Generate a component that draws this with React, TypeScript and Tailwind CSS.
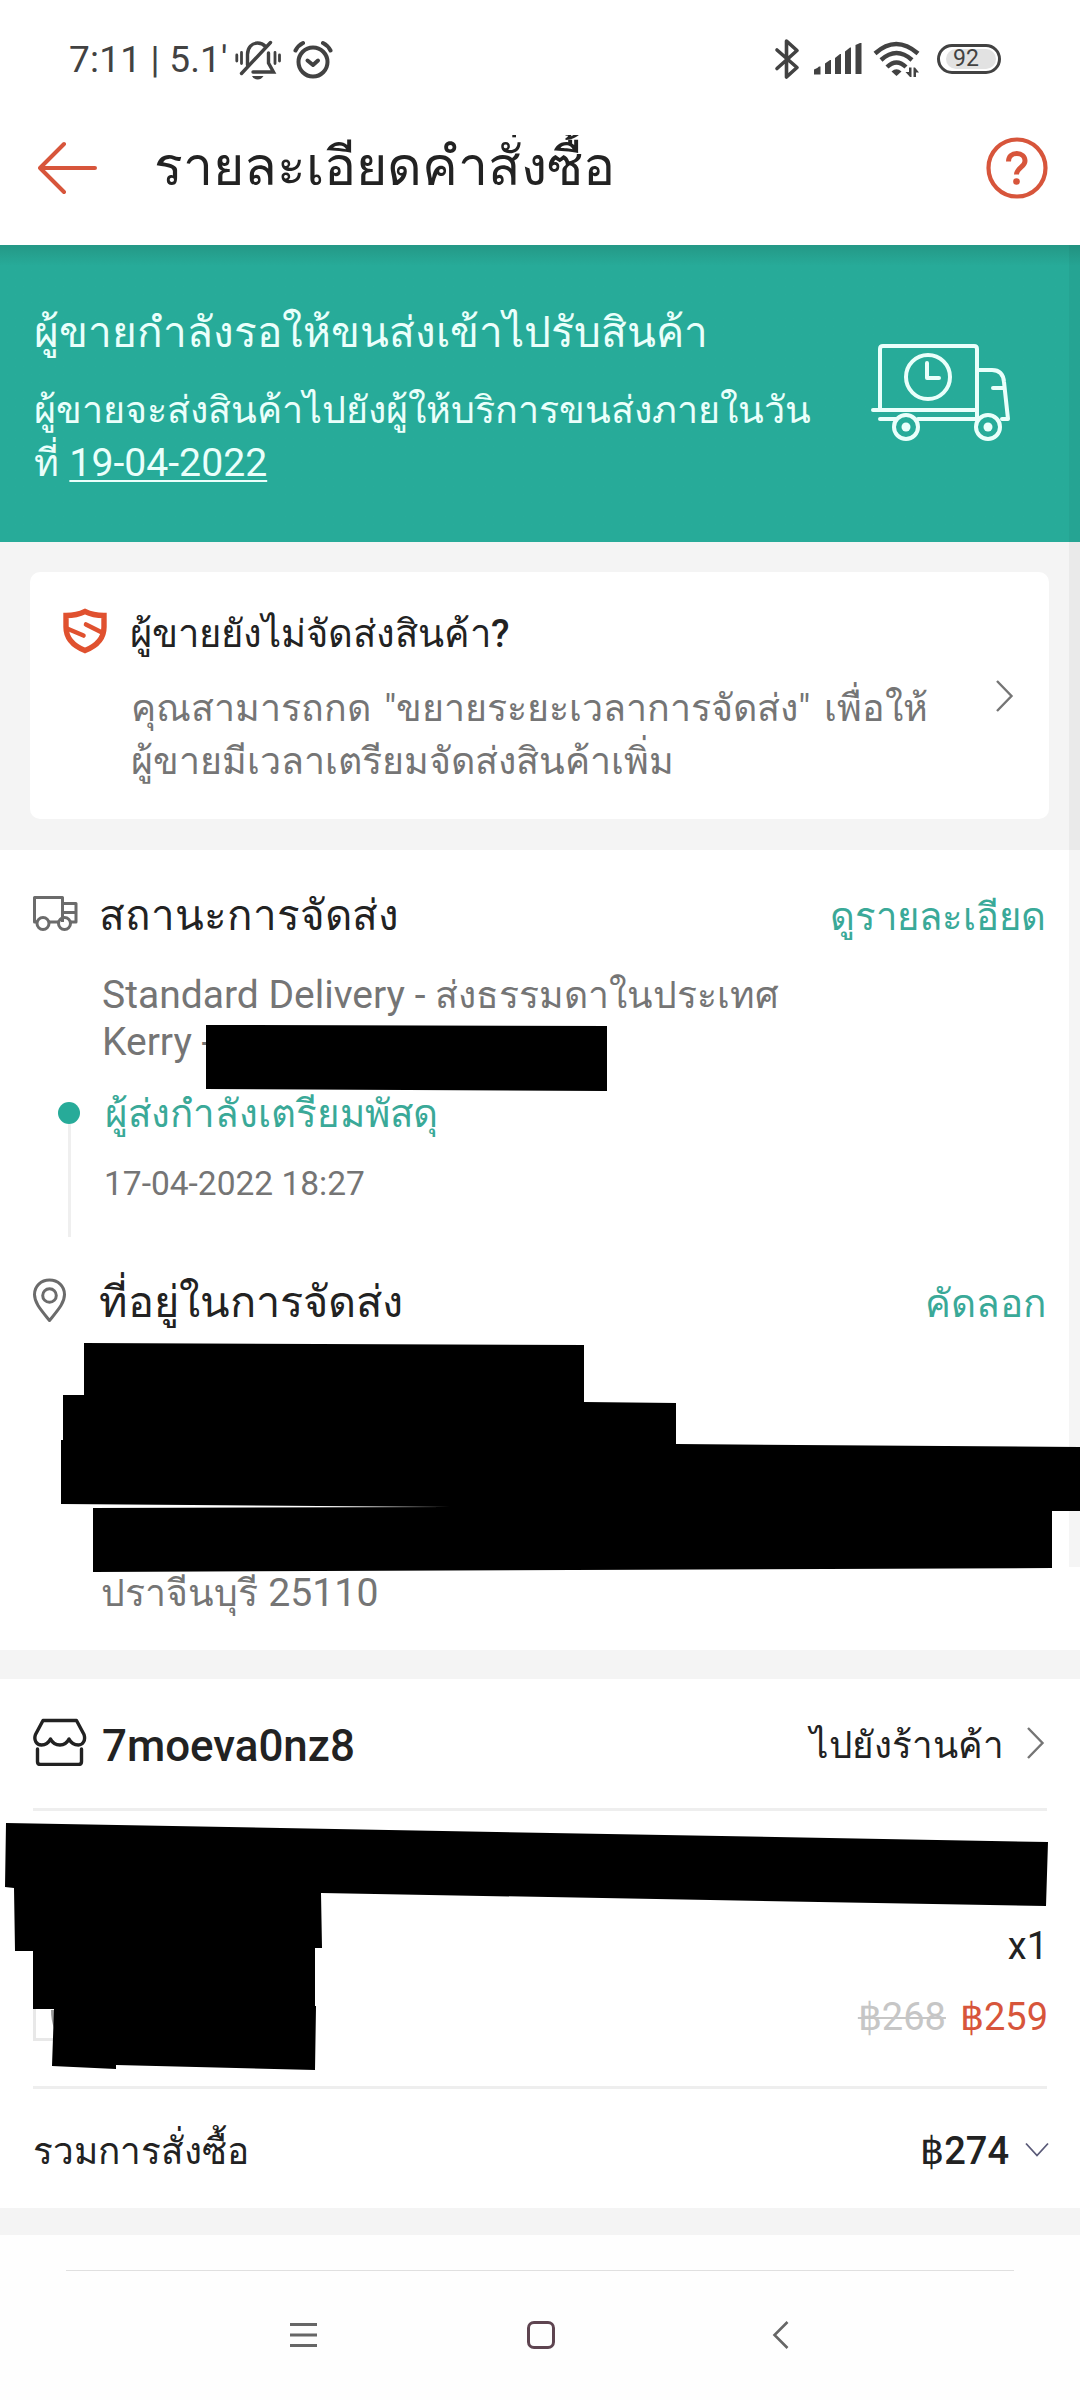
import React from 'react';

const StatusBar: React.FC = () => (
  <div className="flex h-[120px] items-start justify-between pt-9 pl-[69px] pr-[79px] text-[#424242]">
    <div className="flex items-center">
      <span className="w-[166px] whitespace-nowrap text-[37px] leading-[48px] tracking-[0.2px]">7:11 | 5.1'</span>
      {/* Muted bell */}
      <svg width="46" height="40" viewBox="0 0 46 40" fill="none" stroke="currentColor" strokeWidth="3.4" strokeLinecap="round">
        <path d="M1.8 15v6M6.5 12.5v11M40 12.5v11M44.5 15v6" strokeWidth="2.8" />
        <path d="M12.5 25V14.5C12.5 7.5 17 3 22.5 3c3.500 0 6 1.300 8 3.500" />
        <path d="M33.500 13v10l5 9H18" />
        <path d="M6.500 33.500L35.500 2.500" />
        <path d="M17 36h11.500c-1.500 2.500-3.500 3.500-5.700 3.500S18.500 38.500 17 36z" fill="currentColor" stroke="none" />
      </svg>
      {/* Alarm clock */}
      <svg className="ml-3" width="40" height="40" viewBox="0 0 40 40" fill="none" stroke="currentColor" strokeWidth="4" strokeLinecap="round" strokeLinejoin="round">
        <circle cx="20" cy="22" r="14.500" />
        <path d="M14.500 20.500l5.500 4.500 5-4.500" />
        <path d="M2.500 10.500q2.500-5 7.500-7.500M37.500 10.500q-2.500-5-7.500-7.500" />
      </svg>
    </div>
    <div className="flex items-center pt-0.5">
      <svg width="26" height="42" viewBox="0 0 26 42" fill="none" stroke="currentColor" strokeWidth="3.600" strokeLinecap="round" strokeLinejoin="round">
        <path d="M3 12l20 17.500-10.500 9.500V3L23 12.500 3 30.500" />
      </svg>
      <svg className="ml-3.5" width="48" height="32" viewBox="0 0 48 32" fill="currentColor">
        <path d="M0 30.500v-4q4-1.500 5-3h1.500v8H0z" />
        <path d="M11 31V20.500l5-3.500h1v14z" />
        <path d="M21 31V15l5-4h1v20z" />
        <path d="M31 31V8.500l5-4h1v26.500z" />
        <path d="M41.500 31V2l4.500-2h1.500v31z" />
      </svg>
      <svg className="ml-[11px]" width="48" height="36" viewBox="0 0 48 36" fill="none" stroke="currentColor" strokeWidth="4.400">
        <path d="M2 12.500q21-19 43 0" />
        <path d="M8 19q15.500-14 31 0" />
        <path d="M14 26q9.500-9 19 0" />
        <path d="M18.500 30.500q5-4.500 10 0l-5 4.500z" fill="currentColor" stroke="none" />
        <path d="M36 26.500h2.500V36h-1.500l-4.500-5H36zM40.500 36v-9.500H42l4 5h-3V36z" fill="currentColor" stroke="none" />
      </svg>
      <div className="ml-4 flex h-[30px] w-16 items-center rounded-full border-[3px] border-current p-[2px]">
        <span className="ml-1 flex h-5 w-[50px] items-center justify-center rounded-full bg-[#e2e2e2] pr-2.5 text-[23px] leading-5">92</span>
      </div>
    </div>
  </div>
);

const ChevronRight: React.FC = () => (
  <svg width="19" height="34" viewBox="0 0 19 34" fill="none" stroke="#757575" strokeWidth="2.400">
    <path d="M2 2l14.500 15L2 32" />
  </svg>
);

const Header: React.FC = () => (
  <header className="mb-[29px] flex h-24 items-center pl-[38px] pr-8">
    <svg width="60" height="54" viewBox="0 0 60 54" fill="none" stroke="#d7553b" strokeWidth="4" strokeLinecap="round" strokeLinejoin="round">
      <path d="M57 27H2M26 3L2 27l24 24" />
    </svg>
    <h1 className="ml-14 h-[66px] flex-1 overflow-hidden whitespace-nowrap text-[53.600px] leading-[63px] text-[#222]">รายละเอียดคำสั่งซื้อ</h1>
    <svg width="62" height="62" viewBox="0 0 62 62" fill="none" stroke="#d7553b" strokeWidth="4.200">
      <circle cx="31" cy="31" r="28.500" />
      <path d="M22.500 24.500c0-5 3.500-8 8.300-8s8.200 3 8.200 7.500c0 6-8.500 7-8.500 13.500" strokeWidth="5" />
      <circle cx="30.500" cy="44.500" r="3.300" fill="#d7553b" stroke="none" />
    </svg>
  </header>
);

const Banner: React.FC = () => (
  <section className="h-[297px] bg-[#27ab99] bg-linear-to-b from-[#249886] via-[#27ab99] via-7% to-[#27ab99] pl-[34px] pr-[66px] text-[#eafffb]">
    <div className="flex justify-between">
      <div className="whitespace-nowrap pt-[58px]">
        <h2 className="text-[42.350px] leading-[60px]">ผู้ขายกำลังรอให้ขนส่งเข้าไปรับสินค้า</h2>
        <p className="mt-[21px] text-[37.700px] leading-[53px]">
          ผู้ขายจะส่งสินค้าไปยังผู้ให้บริการขนส่งภายในวัน
          <br />
          ที่ <span className="ml-px text-[39.200px] underline decoration-2 underline-offset-4">19-04-2022</span>
        </p>
      </div>
      {/* Delivery truck with clock */}
      <svg className="mt-[98px] shrink-0" width="144" height="102" viewBox="0 0 144 102" fill="none" stroke="#eafffb" strokeWidth="4" strokeLinecap="round" strokeLinejoin="round">
        <path d="M10 67V6q0-3 3-3h91q3 0 3 3v70" />
        <path d="M3 67h104M10 76h16M48 76h59" />
        <path d="M108 27h14q11 0 12 12l4 37h-6M123 45h11" />
        <circle cx="58" cy="34" r="22" />
        <path d="M57 20v15h12" />
        <circle cx="36" cy="84" r="12" />
        <circle cx="118" cy="84" r="12" />
        <circle cx="36" cy="84" r="4.500" fill="#eafffb" stroke="none" />
        <circle cx="118" cy="84" r="4.500" fill="#eafffb" stroke="none" />
      </svg>
    </div>
  </section>
);

const ExtendCard: React.FC = () => (
  <section className="h-[308px] bg-[#f4f4f4] pt-[30px] pl-[30px] pr-[31px]">
    <div className="flex h-[247px] items-center rounded-[10px] bg-white pl-8 pr-[35px]">
      <svg className="mb-auto mt-9" width="46" height="46" viewBox="0 0 46 46" fill="none" stroke="#e0512f" strokeWidth="5.400" strokeLinejoin="miter">
        <path d="M4 7.500q11 0 19-4 8 4 19 4V19q0 16-19 23.500Q4 35 4 19z" />
        <path d="M41 25L24 16.500M5 20.500L21.500 27.500" strokeWidth="4.600" strokeLinecap="round" />
      </svg>
      <div className="mb-auto ml-[22px] flex-1 whitespace-nowrap pt-[37px]">
        <h3 className="text-[38.200px] leading-[50px] text-[#222]">
          ผู้ขายยังไม่จัดส่งสินค้า<span className="text-[38px] font-medium">?</span>
        </h3>
        <p className="mt-[23px] pl-px text-[37.600px] leading-[53px] [word-spacing:4px] text-[#757575]">
          คุณสามารถกด "ขยายระยะเวลาการจัดส่ง" เพื่อให้
          <br />
          ผู้ขายมีเวลาเตรียมจัดส่งสินค้าเพิ่ม
        </p>
      </div>
      <ChevronRight />
    </div>
  </section>
);

const Delivery: React.FC = () => (
  <section className="relative h-[800px] whitespace-nowrap bg-white pt-[35px] pl-8 pr-[34px]">
    <div className="flex h-[60px] items-center">
      <svg className="-mt-1" width="48" height="38" viewBox="0 0 48 38" fill="none" stroke="#6b6b6b" strokeWidth="3" strokeLinejoin="round">
        <path d="M5 28H2.500V3.500h28V28M17 28h9M30.500 9.500h13.500V28H38M30.500 18.500h13.500" />
        <circle cx="11" cy="29.500" r="6" />
        <circle cx="32.500" cy="29.500" r="6" />
      </svg>
      <h2 className="ml-[19px] flex-1 pt-px text-[42.200px] leading-[60px] text-[#222]">สถานะการจัดส่ง</h2>
      <a className="pt-1 text-[38.250px] leading-[60px] text-[#3aa998]">ดูรายละเอียด</a>
    </div>
    <p className="mt-[27px] pl-[70px] text-[39px] leading-[47px] text-[#757575]">
      Standard Delivery - <span className="text-[37.350px] leading-none">ส่งธรรมดาในประเทศ</span>
      <br />
      Kerry -
    </p>
    <div className="mt-[22px] flex h-[149px]">
      <div className="ml-[26px] flex w-[22px] flex-col items-center pt-3.5">
        <span className="size-[22px] rounded-full bg-[#27ab99]" />
        <span className="w-[3px] flex-1 bg-[#efefef]" />
      </div>
      <div className="ml-[25px] pt-px">
        <p className="text-[38.500px] leading-[50px] text-[#3aa998]">ผู้ส่งกำลังเตรียมพัสดุ</p>
        <p className="mt-[25px] -ml-px text-[33.500px] leading-10 text-[#757575]">17-04-2022 18:27</p>
      </div>
    </div>

    <div className="mt-[35px] flex h-[60px] items-center">
      <svg className="-mt-1" width="36" height="46" viewBox="0 0 36 46" fill="none" stroke="#6b6b6b" strokeWidth="3" strokeLinejoin="round">
        <path d="M17.500 43.500C9 33 2.500 26 2.500 17.500 2.500 9 9 3 17.500 3S32.500 9 32.500 17.500c0 8.500-6.500 15.500-15 26z" />
        <circle cx="17.500" cy="18.500" r="6.800" />
      </svg>
      <h2 className="ml-[31px] flex-1 pt-px text-[43.300px] leading-[60px] text-[#222]">ที่อยู่ในการจัดส่ง</h2>
      <a className="pt-1 text-[38.700px] leading-[60px] text-[#3aa998]">คัดลอก</a>
    </div>
    <p className="mt-[238px] pl-[69px] text-[37.400px] leading-[47px] text-[#757575]">
      ปราจีนบุรี <span className="ml-px text-[39.200px]">25110</span>
    </p>

    {/* Hidden tracking number and address */}
    <svg className="absolute left-0 top-0" width="1080" height="800" viewBox="0 850 1080 800">
      <path d="M206 1025L607 1026V1091L206 1089z" />
      <path d="M84 1343L584 1345V1402L676 1403V1444L1080 1447V1511H1052V1568L93 1572V1508L450 1507L61 1504V1440H63V1395H84z" />
    </svg>
  </section>
);

const Shop: React.FC = () => (
  <section className="relative h-[529px] whitespace-nowrap bg-white pt-[35px] pl-[33px] pr-[33px]">
    <div className="flex h-[60px] items-center">
      <svg className="-mt-1" width="54" height="48" viewBox="0 0 54 48" fill="none" stroke="#222" strokeWidth="3.400" strokeLinecap="round" strokeLinejoin="round">
        <path d="M10 2.500h33.500l7.500 14c2 6-1.500 10.500-5.500 10.500-4.500 0-7.500-2-9.500-6-2 4-5 6-9 6s-7.500-2-9.500-6c-2 4-5 6-9 6-5 0-8-5-6-10.500z" />
        <path d="M4.500 31v12.500q0 3 3 3h38q3 0 3-3V31" />
      </svg>
      <h2 className="ml-[15px] flex-1 pt-1 text-[43.900px] leading-[60px] font-medium text-[#222]">7moeva0nz8</h2>
      <span className="mr-[22px] pt-1 text-[36.800px] leading-[60px] text-[#222]">ไปยังร้านค้า</span>
      <div className="-mt-0.5 mr-0.5">
        <ChevronRight />
      </div>
    </div>
    <div className="mt-[34px] h-[3px] bg-[#eee]" />
    <div className="flex h-[275px] justify-between">
      <div className="mt-[18px] h-[212px] w-[222px] border-[3px] border-[#e8e8e8]" />
      <div className="-mr-px pt-[112px] text-right text-[38px] leading-[46px]">
        <p className="text-[#222]">x1</p>
        <p className="mt-[25px]">
          <span className="text-[#c6c6c6] line-through decoration-2">฿268</span>
          <span className="ml-3.5 text-[#d7553b]">฿259</span>
        </p>
      </div>
    </div>
    <div className="h-[3px] bg-[#eee]" />
    <div className="mt-9 flex h-[50px] items-center">
      <span className="flex-1 pt-[3px] text-[36.900px] leading-[50px] text-[#222]">รวมการสั่งซื้อ</span>
      <span className="pt-0.5 text-[38px] leading-[50px] font-medium text-[#222]">฿274</span>
      <svg className="ml-4 -mr-0.5" width="24" height="16" viewBox="0 0 24 16" fill="none" stroke="#5a5a78" strokeWidth="1.800">
        <path d="M1 1.500l11 12 11-12" />
      </svg>
    </div>

    {/* Hidden product name and photo */}
    <svg className="absolute left-0 top-0" width="1080" height="529" viewBox="0 1679 1080 529">
      <path d="M51 2010h3v18q-3-8-3-18z" fill="#999" />
      <path d="M6 1823L1048 1842L1046 1906L321 1893L322 1948H315V2006H316L315 2070L116 2065V2069L52 2066L54 2009H33V1951H15L14 1888L5 1887z" />
    </svg>
  </section>
);

const NavBar: React.FC = () => (
  <nav className="flex h-[165px] flex-col bg-[#fefefe] pt-[35px]">
    <div className="mx-[66px] h-px bg-[#e0e0e0]" />
    <div className="mt-[49px] flex h-[30px] items-center pl-[290px]">
      <svg width="28" height="26" viewBox="0 0 28 26" stroke="#666" strokeWidth="2.800">
        <path d="M0 2.500h27M0 13h27M0 23.500h27" />
      </svg>
      <span className="ml-[209px] size-7 rounded-[7px] border-[3px] border-[#5e4450]" />
      <svg className="ml-[217px]" width="18" height="30" viewBox="0 0 18 30" fill="none" stroke="#666" strokeWidth="2.600">
        <path d="M15.500 2L2.500 15l13 13" />
      </svg>
    </div>
  </nav>
);

const App: React.FC = () => {
  return (
    <div className="relative h-[2400px] w-[1080px] overflow-hidden bg-white font-['Roboto',sans-serif]">
      <StatusBar />
      <Header />
      <Banner />
      <ExtendCard />
      <Delivery />
      <div className="h-[29px] bg-[#f4f4f4]" />
      <Shop />
      <div className="h-[27px] bg-[#f4f4f4]" />
      <NavBar />
      {/* Scrollbar thumb */}
      <div className="absolute right-0 top-[245px] h-[1322px] w-[11px] bg-black/4" />
    </div>
  );
};

export default App;
